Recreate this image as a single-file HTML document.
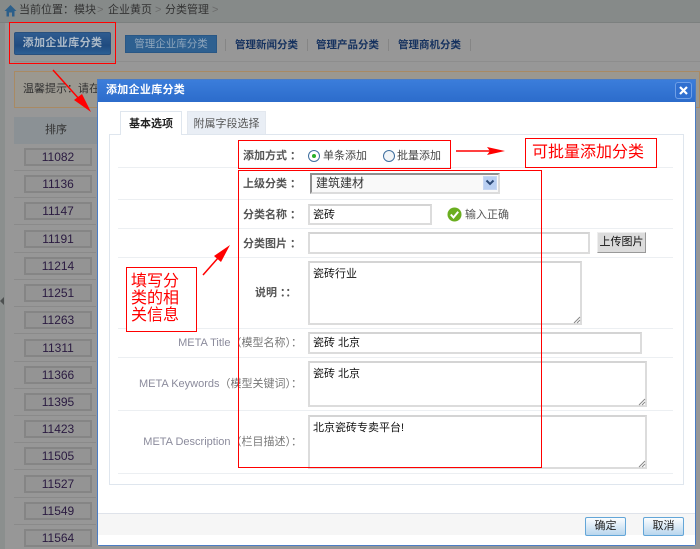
<!DOCTYPE html>
<html lang="zh">
<head>
<meta charset="utf-8">
<title>添加企业库分类</title>
<style>
html,body{margin:0;padding:0}
body{width:700px;height:549px;overflow:hidden;position:relative;background:#979797;font-family:"Liberation Sans","WenQuanYi Zen Hei","Noto Sans CJK SC",sans-serif;font-size:11px;color:#333}
div,span,b{position:absolute;box-sizing:border-box;white-space:nowrap}
.t{line-height:16px}
.num{left:24px;width:68px;height:18px;border:2px solid #858585;background:#949494;color:#2a1a40;font-size:12px;line-height:14px;text-align:center}
.sep{left:14px;width:82px;height:1px;background:#8a8a8a}
.line{left:118px;width:555px;height:1px;background:#eceff2}
.lab{color:#555;font-weight:bold;line-height:16px;left:243px}
.lab span{position:static;margin-left:3px}
.meta{color:#8b8b9c;font-weight:normal;font-size:11px;left:118px;width:184px;text-align:right}
.meta span{position:static;font-size:11px;color:#777;margin-left:0}
.inp{background:#fff;border:2px solid #dcdcdc;border-top-color:#d4d4d4;color:#111;line-height:16px;padding:1px 3px}
.red{border:1px solid #f00}
.rt{color:#f00;font-size:16px;font-weight:normal;font-family:"Liberation Sans","Noto Sans CJK SC",sans-serif}
.sbtn{top:517px;height:19px;width:41px;border:1px solid #63a6d8;border-radius:2px;background:linear-gradient(#fbfdff,#b9d6ee);color:#222;text-align:center;line-height:17px}
.nav{color:#16325f;font-weight:bold;top:37px;line-height:16px;font-size:10.5px}
.bar{top:39px;width:1px;height:12px;background:#858585}
.crumb{top:2px;line-height:16px;color:#333}
.gt{top:2px;line-height:16px;color:#6a6a6a}
</style>
</head>
<body>
<div style="left:0;top:0;width:700px;height:23px;background:#868a89;border-bottom:1px solid #7c807f"></div>
<div style="left:0;top:23px;width:5px;height:526px;background:#8b8f8e"></div>
<svg style="position:absolute;left:4px;top:4px" width="13" height="13" viewBox="0 0 13 13"><path d="M6.500 1 0.500 7H2.500V12.500H5V8.500H8V12.500H10.500V7H12.500Z" fill="#2c5f8a"/></svg>
<div class="crumb" style="left:19px">当前位置：模块</div>
<div class="gt" style="left:97px">&gt;</div>
<div class="crumb" style="left:108px">企业黄页</div>
<div class="gt" style="left:155px">&gt;</div>
<div class="crumb" style="left:165px">分类管理</div>
<div class="gt" style="left:212px">&gt;</div>

<div style="left:14px;top:32px;width:97px;height:23px;border:1px solid #28507e;border-radius:2px;background:linear-gradient(#2f5c90,#1f4b80 60%,#2c5f94);color:#aebbc8;font-weight:bold;text-align:center;line-height:21px;letter-spacing:.4px">添加企业库分类</div>
<div style="left:125px;top:35px;width:92px;height:18px;background:#2e6090;border:1px solid #295785;color:#8fa6bc;text-align:center;line-height:16px;font-size:10.5px">管理企业库分类</div>
<div class="bar" style="left:225px"></div>
<div class="nav" style="left:235px">管理新闻分类</div>
<div class="bar" style="left:307px"></div>
<div class="nav" style="left:316px">管理产品分类</div>
<div class="bar" style="left:388px"></div>
<div class="nav" style="left:398px">管理商机分类</div>
<div class="bar" style="left:470px"></div>
<div style="left:14px;top:61px;width:686px;height:1px;background:#8d8d8d"></div>

<div style="left:14px;top:71px;width:686px;height:37px;border:1px solid #a98a63;background:#9b9890"></div>
<div class="t" style="left:23px;top:81px;color:#333">温馨提示：请在</div>

<div style="left:14px;top:117px;width:84px;height:27px;background:#8b9195;color:#333;text-align:center;line-height:27px">排序</div>
<div class="num" style="top:148px">11082</div><div class="sep" style="top:170px"></div>
<div class="num" style="top:175px">11136</div><div class="sep" style="top:197px"></div>
<div class="num" style="top:202px">11147</div><div class="sep" style="top:224px"></div>
<div class="num" style="top:230px">11191</div><div class="sep" style="top:252px"></div>
<div class="num" style="top:257px">11214</div><div class="sep" style="top:279px"></div>
<div class="num" style="top:284px">11251</div><div class="sep" style="top:306px"></div>
<div class="num" style="top:311px">11263</div><div class="sep" style="top:333px"></div>
<div class="num" style="top:339px">11311</div><div class="sep" style="top:361px"></div>
<div class="num" style="top:366px">11366</div><div class="sep" style="top:388px"></div>
<div class="num" style="top:393px">11395</div><div class="sep" style="top:415px"></div>
<div class="num" style="top:420px">11423</div><div class="sep" style="top:442px"></div>
<div class="num" style="top:447px">11505</div><div class="sep" style="top:469px"></div>
<div class="num" style="top:475px">11527</div><div class="sep" style="top:497px"></div>
<div class="num" style="top:502px">11549</div><div class="sep" style="top:524px"></div>
<div class="num" style="top:529px">11564</div>
<div style="left:0;top:297px;width:0;height:0;border:4px solid transparent;border-right:4px solid #4d5050;border-left:0"></div>

<!-- modal -->
<div style="left:97px;top:79px;width:599px;height:467px;background:#fff;border:1px solid #4a7cc4;border-radius:0 0 3px 3px"></div>
<div style="left:98px;top:80px;width:597px;height:22px;background:linear-gradient(#3b7ddb,#2c6ccb);color:#fff;font-weight:bold;line-height:20px;padding-left:8px;letter-spacing:.3px">添加企业库分类</div>
<div style="left:675px;top:82px;width:17px;height:17px;border:1px solid #6f9fe6;border-radius:3px;background:#2f6fd0"></div>
<svg style="position:absolute;left:679px;top:86px" width="9" height="9" viewBox="0 0 9 9"><path d="M1 1 8 8M8 1 1 8" stroke="#fff" stroke-width="2.200" fill="none"/></svg>

<!-- tabs/panel -->
<div style="left:109px;top:134px;width:575px;height:351px;border:1px solid #dfe6ee;background:#fff"></div>
<div style="left:120px;top:111px;width:62px;height:24px;border:1px solid #dfe6ee;border-bottom:0;background:#fff;color:#222;font-weight:bold;text-align:center;line-height:25px">基本选项</div>
<div style="left:187px;top:111px;width:79px;height:23px;background:#e9eef5;border:1px solid #e3e8ef;border-bottom:0;color:#555;text-align:center;line-height:25px">附属字段选择</div>

<div class="line" style="top:167px"></div>
<div class="line" style="top:199px"></div>
<div class="line" style="top:228px"></div>
<div class="line" style="top:257px"></div>
<div class="line" style="top:328px"></div>
<div class="line" style="top:357px"></div>
<div class="line" style="top:410px"></div>
<div class="line" style="top:473px"></div>

<!-- form -->
<div class="lab" style="top:148px">添加方式<span>：</span></div>
<div style="left:308px;top:150px;width:12px;height:12px;border:1px solid #3f6f9f;border-radius:50%;background:#fff"></div>
<div style="left:312px;top:154px;width:4px;height:4px;border-radius:50%;background:#28b028"></div>
<div class="t" style="left:323px;top:148px;color:#444">单条添加</div>
<div style="left:383px;top:150px;width:12px;height:12px;border:1px solid #3f6f9f;border-radius:50%;background:#f2f5f8"></div>
<div class="t" style="left:397px;top:148px;color:#444">批量添加</div>

<div class="lab" style="top:176px">上级分类<span>：</span></div>
<div style="left:310px;top:173px;width:190px;height:21px;border:2px solid #dcdcdc;border-top-color:#8f8f8f;border-left-color:#8f8f8f;background:#f9f9f9;color:#333;font-size:12px;line-height:17px;padding-left:4px">建筑建材</div>
<div style="left:483px;top:176px;width:14px;height:14px;background:#b9cff2;border:1px solid #c6d6f2"></div>
<svg style="position:absolute;left:485px;top:179px" width="10" height="8" viewBox="0 0 10 8"><path d="M1.500 1.500 5 5 8.500 1.500" fill="none" stroke="#2c4a78" stroke-width="2"/></svg>

<div class="lab" style="top:207px">分类名称<span>：</span></div>
<div class="inp" style="left:308px;top:204px;width:124px;height:21px">瓷砖</div>
<svg style="position:absolute;left:447px;top:207px" width="15" height="15" viewBox="0 0 15 15"><circle cx="7.500" cy="7.500" r="7" fill="#6aae20"/><path d="M3.800 7.500 6.500 10.500 11.200 4.800" fill="none" stroke="#fff" stroke-width="2"/></svg>
<div class="t" style="left:465px;top:207px;color:#555">输入正确</div>

<div class="lab" style="top:236px">分类图片<span>：</span></div>
<div class="inp" style="left:308px;top:232px;width:282px;height:22px"></div>
<div style="left:597px;top:232px;width:49px;height:21px;background:#dcdcdc;border:1px solid;border-color:#eee #999 #999 #eee;color:#111;text-align:center;line-height:19px">上传图片</div>

<div class="lab" style="top:285px;left:255px">说明<span>：</span><span style="margin-left:0">：</span></div>
<div class="inp" style="left:308px;top:261px;width:274px;height:64px;padding-top:3px">瓷砖行业</div>

<div class="lab meta" style="top:335px">META Title<span>（模型名称）：</span></div>
<div class="inp" style="left:308px;top:332px;width:334px;height:22px">瓷砖 北京</div>

<div class="lab meta" style="top:376px">META Keywords<span>（模型关键词）：</span></div>
<div class="inp" style="left:308px;top:361px;width:339px;height:46px;padding-top:3px">瓷砖 北京</div>

<div class="lab meta" style="top:434px">META Description<span>（栏目描述）：</span></div>
<div class="inp" style="left:308px;top:415px;width:339px;height:54px;padding-top:3px">北京瓷砖专卖平台!</div>

<svg style="position:absolute;left:0;top:0" width="700" height="549" viewBox="0 0 700 549">
<path d="M574 323 580 317M577 323 580 320M639 405 645 399M642 405 645 402M639 467 645 461M642 467 645 464" stroke="#888" stroke-width="1" fill="none"/>
<path d="M53 70 80 100" stroke="#f00" stroke-width="1.500" fill="none"/>
<path d="M91 112 74 100 82 94Z" fill="#f00"/>
<path d="M203 275 218 258" stroke="#f00" stroke-width="1.500" fill="none"/>
<path d="M230 245 221 262 214 256Z" fill="#f00"/>
<path d="M456 151H490" stroke="#f00" stroke-width="1.500" fill="none"/>
<path d="M505 151 487 147 490 151 487 155Z" fill="#f00"/>
</svg>

<!-- footer -->
<div style="left:98px;top:513px;width:597px;height:22px;background:#f6f6f6;border-top:1px solid #dfe3ea"></div>
<div style="left:98px;top:535px;width:597px;height:10px;background:#fff"></div>
<div class="sbtn" style="left:585px">确定</div>
<div class="sbtn" style="left:643px">取消</div>

<!-- annotations -->
<div class="red" style="left:9px;top:22px;width:107px;height:42px"></div>
<div class="red" style="left:238px;top:140px;width:213px;height:29px"></div>
<div class="red" style="left:238px;top:170px;width:304px;height:298px"></div>
<div class="red rt" style="left:525px;top:138px;width:132px;height:30px;line-height:27px;padding-left:6px;background:#fff">可批量添加分类</div>
<div class="red rt" style="left:126px;top:267px;width:71px;height:65px;line-height:17px;padding:5px 0 0 4px;background:#fff;white-space:normal">填写分<br>类的相<br>关信息</div>
</body>
</html>
